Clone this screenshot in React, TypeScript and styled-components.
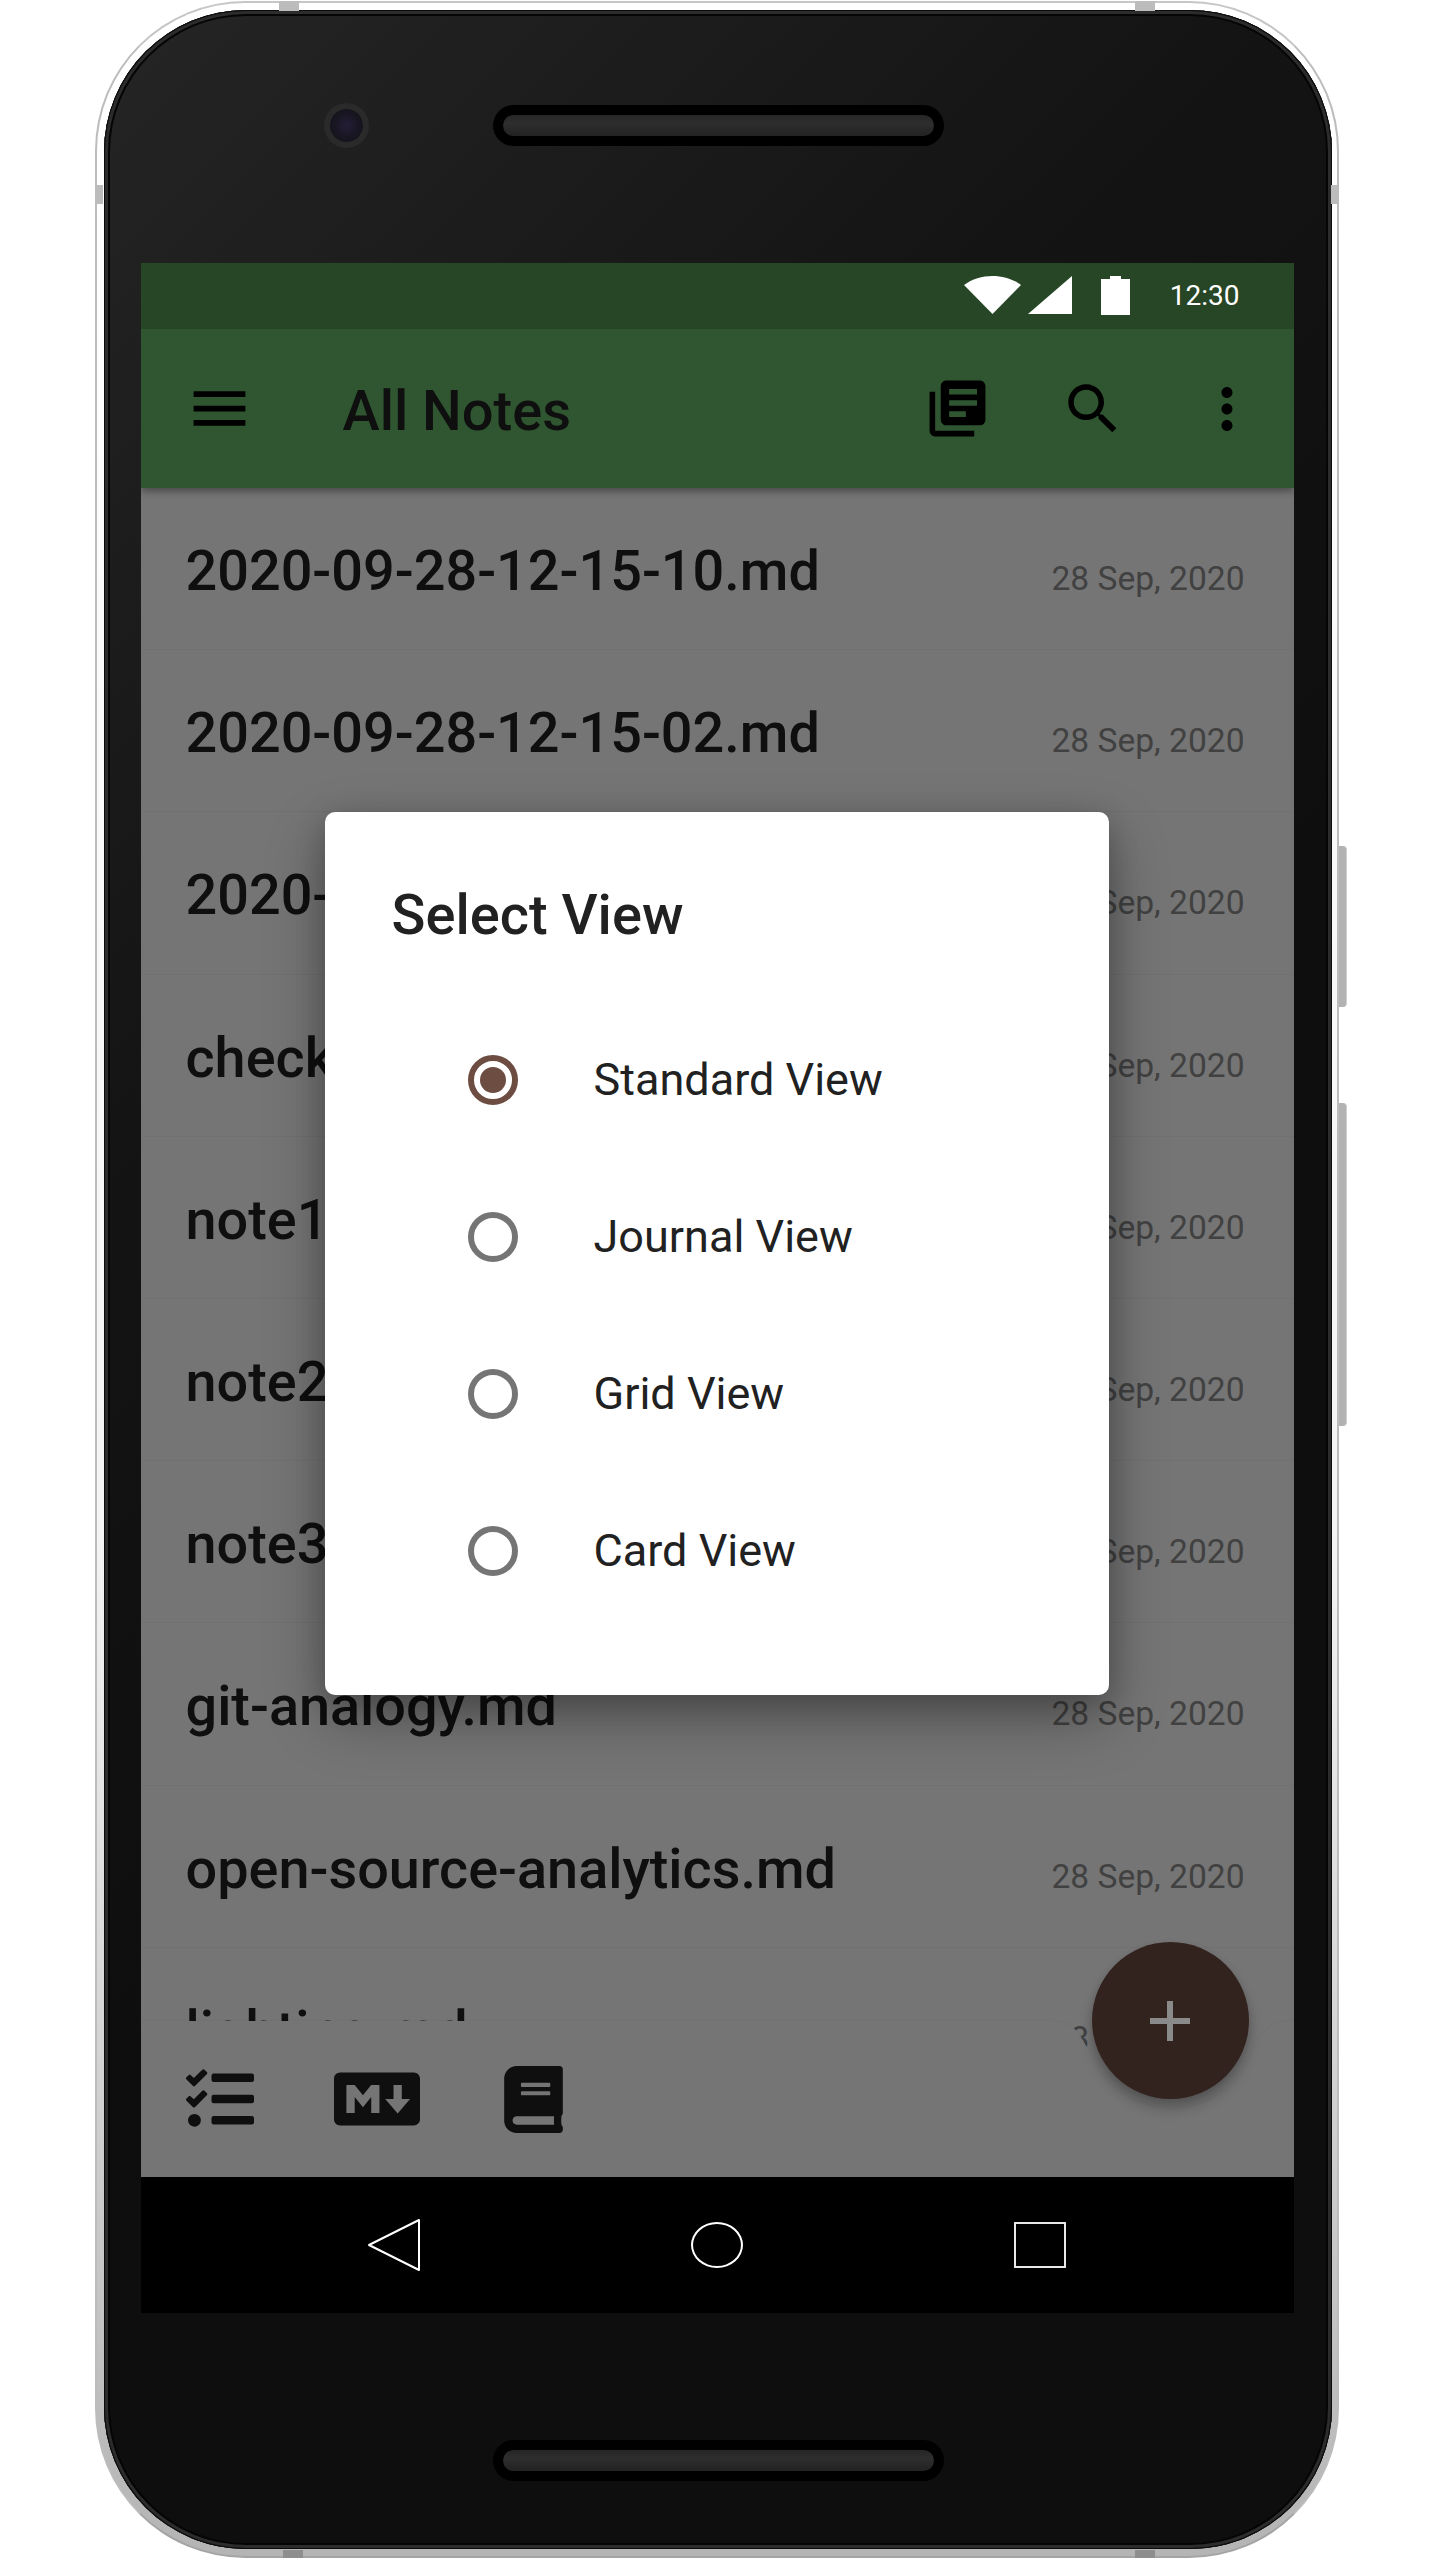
import React from "react";
import styled, { createGlobalStyle } from "styled-components";
import { FaBook, FaMarkdown, FaTasks } from "react-icons/fa";

const notes = [
  "2020-09-28-12-15-10.md",
  "2020-09-28-12-15-02.md",
  "2020-09-28-12-14-58.md",
  "checklist.md",
  "note1.md",
  "note2.md",
  "note3.md",
  "git-analogy.md",
  "open-source-analytics.md",
  "lighting.md",
];

const views = ["Standard View", "Journal View", "Grid View", "Card View"];

const App = () => (
  <>
    <GlobalStyle />
    <Device>
      <TopNotch $left={182} />
      <TopNotch $left={1038} />
      <SideNotch $side="left" />
      <SideNotch $side="right" />
      <BottomNotch $left={186} />
      <BottomNotch $left={1038} />
      <VolumeKey $top={843} $height={161} />
      <VolumeKey $top={1100} $height={323} />
      <Body>
        <Bezel $height={253} $pad="0 0 23px">
          <Camera>
            <Lens />
          </Camera>
          <Speaker />
        </Bezel>
        <Screen>
          <StatusBar>
            <svg width="57" height="38" viewBox="0 0 57 38">
              <path d="M0 9C16-3 41-3 57 9L28.500 38Z" fill="#fff" />
            </svg>
            <SignalIcon width="44" height="38" viewBox="0 0 44 38">
              <path d="M44 0V38H0Z" fill="#fff" />
            </SignalIcon>
            <BatteryIcon width="29" height="39" viewBox="0 0 29 39">
              <path d="M9 0h11v3h9v36H0V3h9z" fill="#fff" />
            </BatteryIcon>
            <Clock>12:30</Clock>
          </StatusBar>
          <Content>
            <AppBar>
              <MenuButton width="69" height="69" viewBox="0 0 24 24">
                <path d="M3 18h18v-2H3v2zm0-5h18v-2H3v2zm0-7v2h18V6H3z" />
              </MenuButton>
              <Title>All Notes</Title>
              <ActionIcon width="67" height="67" viewBox="0 0 24 24" $gap={69}>
                <path d="M4 6H2v14c0 1.100.9 2 2 2h14v-2H4V6zm16-4H8c-1.100 0-2 .9-2 2v12c0 1.100.9 2 2 2h12c1.100 0 2-.9 2-2V4c0-1.100-.9-2-2-2zm-1 9H9V9h10v2zm-4 4H9v-2h6v2zm4-8H9V5h10v2z" />
              </ActionIcon>
              <ActionIcon width="66" height="66" viewBox="0 0 24 24" $gap={68}>
                <path d="M15.500 14h-.79l-.28-.27C15.410 12.590 16 11.110 16 9.500 16 5.910 13.090 3 9.500 3S3 5.910 3 9.500 5.910 16 9.500 16c1.610 0 3.090-.59 4.230-1.570l.27.28v.79l5 4.990L20.490 19l-4.990-5zm-6 0C7.010 14 5 11.990 5 9.500S7.010 5 9.500 5 14 7.010 14 9.500 11.990 14 9.500 14z" />
              </ActionIcon>
              <ActionIcon width="66" height="66" viewBox="0 0 24 24" $gap={34}>
                <path d="M12 8c1.100 0 2-.9 2-2s-.9-2-2-2-2 .9-2 2 .9 2 2 2zm0 2c-1.100 0-2 .9-2 2s.9 2 2 2 2-.9 2-2-.9-2-2-2zm0 6c-1.100 0-2 .9-2 2s.9 2 2 2 2-.9 2-2-.9-2-2-2z" />
              </ActionIcon>
            </AppBar>
            <NoteList>
              {notes.map((note) => (
                <NoteRow key={note}>
                  <NoteName>{note}</NoteName>
                  <NoteDate>28 Sep, 2020</NoteDate>
                </NoteRow>
              ))}
            </NoteList>
            <BottomBar>
              <BarShape viewBox="0 0 1153 156" preserveAspectRatio="none">
                <path
                  d="M0 0H900C918 0 934 2 941 18L948 30A87 87 0 0 0 1112 30C1117 10 1135 0 1153 0V156H0Z"
                  fill="#fff"
                />
              </BarShape>
              <BarIcons>
                <FaTasks size={68} />
                <MarkdownIcon>
                  <FaMarkdown size={86} />
                </MarkdownIcon>
                <FaBook size={67} />
              </BarIcons>
            </BottomBar>
            <Scrim>
              <Dialog>
                <DialogTitle>Select View</DialogTitle>
                {views.map((view, i) => (
                  <ViewOption key={view}>
                    <Radio $checked={i === 0} />
                    <ViewLabel>{view}</ViewLabel>
                  </ViewOption>
                ))}
              </Dialog>
            </Scrim>
            <Fab>
              <svg width="40" height="40" viewBox="0 0 40 40">
                <path d="M17 0h6v17h17v6H23v17h-6V23H0v-6h17z" fill="#8b8a8a" />
              </svg>
            </Fab>
          </Content>
          <NavBar>
            <NavItem>
              <svg width="54" height="54" viewBox="0 0 54 54">
                <path d="M52 2V52L2 27Z" fill="none" stroke="#fff" strokeWidth="2" strokeLinejoin="round" />
              </svg>
            </NavItem>
            <NavItem>
              <HomeKey />
            </NavItem>
            <NavItem>
              <RecentKey />
            </NavItem>
          </NavBar>
        </Screen>
        <Bezel $height={235} $pad="60px 0 0">
          <Speaker />
        </Bezel>
      </Body>
    </Device>
  </>
);

const GlobalStyle = createGlobalStyle`
  html, body {
    margin: 0;
    background: #fff;
  }
  * {
    box-sizing: border-box;
  }
  #root {
    width: 1440px;
    height: 2560px;
    overflow: hidden;
    font-family: Roboto, "Liberation Sans", sans-serif;
  }
`;

const Device = styled.div`
  position: relative;
  width: 1244px;
  height: 2557px;
  margin: 1px 0 0 95px;
  padding: 7px 5px 7px 7px;
  border: 2px solid #c6c6c6;
  border-bottom-color: #a4a4a4;
  border-left-color: #bcbcbc;
  border-right-color: #bcbcbc;
  border-radius: 150px;
  background: linear-gradient(#fff 0%, #f4f4f4 60%, #b4b4b4 100%);
`;

const TopNotch = styled.div<{ $left: number }>`
  position: absolute;
  top: -2px;
  left: ${(p) => p.$left}px;
  width: 20px;
  height: 10px;
  background: #bcbcbc;
`;

const BottomNotch = styled.div<{ $left: number }>`
  position: absolute;
  bottom: -2px;
  left: ${(p) => p.$left}px;
  width: 20px;
  height: 8px;
  background: #8e8e8e;
`;

const SideNotch = styled.div<{ $side: "left" | "right" }>`
  position: absolute;
  top: 182px;
  ${(p) => p.$side}: -2px;
  width: 8px;
  height: 19px;
  background: #bcbcbc;
`;

const VolumeKey = styled.div<{ $top: number; $height: number }>`
  position: absolute;
  top: ${(p) => p.$top}px;
  right: -10px;
  width: 8px;
  height: ${(p) => p.$height}px;
  border-radius: 0 4px 4px 0;
  background: #b2b2b2;
  border-right: 1px solid #cfcfcf;
`;

const Body = styled.div`
  display: flex;
  flex-direction: column;
  align-items: center;
  height: 100%;
  border-radius: 142px;
  background: linear-gradient(135deg, #252525 0%, #141414 30%, #0e0e0e 55%);
  box-shadow: inset 0 0 0 1px #0a0a0a, inset 0 0 0 4px #2c2c2c, inset 0 0 0 6px #050505;
`;

const Bezel = styled.div<{ $height: number; $pad: string }>`
  display: flex;
  align-items: center;
  justify-content: center;
  position: relative;
  flex: none;
  width: 100%;
  height: ${(p) => p.$height}px;
  padding: ${(p) => p.$pad};
`;

const Camera = styled.div`
  position: absolute;
  left: 220px;
  top: 93px;
  display: flex;
  align-items: center;
  justify-content: center;
  width: 45px;
  height: 45px;
  border-radius: 50%;
  background: #2a2a2a;
`;

const Lens = styled.div`
  width: 33px;
  height: 33px;
  border-radius: 50%;
  background: radial-gradient(circle, #241d36 0%, #17151f 60%, #121214 100%);
`;

const Speaker = styled.div`
  width: 451px;
  height: 41px;
  padding: 10px;
  border-radius: 21px;
  background: #000;

  &::before {
    content: "";
    display: block;
    height: 21px;
    border-radius: 11px;
    background: linear-gradient(#262626, #2e2e2e 40%, #222);
  }
`;

const Screen = styled.div`
  display: flex;
  flex-direction: column;
  flex: none;
  width: 1153px;
  height: 2050px;
  margin-left: -2px;
`;

const StatusBar = styled.div`
  display: flex;
  align-items: center;
  justify-content: flex-end;
  flex: none;
  height: 66px;
  padding: 0 54px 2px 0;
  background: #274626;
`;

const SignalIcon = styled.svg`
  margin-left: 7px;
`;

const BatteryIcon = styled.svg`
  margin-left: 29px;
`;

const Clock = styled.span`
  margin-left: 40px;
  font-size: 28px;
  color: #fff;
`;

const Content = styled.div`
  position: relative;
  flex: 1;
  display: flex;
  flex-direction: column;
  overflow: hidden;
  background: #fff;
`;

const AppBar = styled.div`
  position: relative;
  z-index: 1;
  display: flex;
  align-items: center;
  flex: none;
  height: 159px;
  background: #66bb6a;
  box-shadow: 0 3px 8px rgba(0, 0, 0, 0.4);
`;

const MenuButton = styled.svg`
  margin-left: 44px;
`;

const Title = styled.div`
  flex: 1;
  margin-left: 89px;
  padding-top: 5px;
  font-size: 56px;
  font-weight: 500;
  color: #212121;
`;

const ActionIcon = styled.svg<{ $gap: number }>`
  margin-right: ${(p) => p.$gap}px;
  fill: #000;
`;

const NoteList = styled.div`
  flex: 1;
  overflow: hidden;
`;

const NoteRow = styled.div`
  display: flex;
  align-items: baseline;
  justify-content: space-between;
  height: 162.2px;
  padding: 50px 49px 0 45px;
  border-bottom: 1px solid rgba(0, 0, 0, 0.03);
`;

const NoteName = styled.span`
  font-size: 55.8px;
  font-weight: 500;
  color: #212121;
`;

const NoteDate = styled.span`
  font-size: 33.6px;
  color: #8f8f8f;
`;

const BottomBar = styled.div`
  position: absolute;
  left: 0;
  right: 0;
  bottom: 0;
  height: 156px;
`;

const BarShape = styled.svg`
  position: absolute;
  inset: 0;
  width: 100%;
  height: 100%;
  filter: drop-shadow(0 -1px 1px rgba(0, 0, 0, 0.04));
`;

const BarIcons = styled.div`
  position: relative;
  display: flex;
  align-items: center;
  gap: 80px;
  height: 100%;
  padding: 0 0 0 45px;
  color: #212121;
`;

const MarkdownIcon = styled.div`
  display: flex;
`;

const Scrim = styled.div`
  position: absolute;
  inset: 0;
  z-index: 2;
  display: flex;
  align-items: center;
  justify-content: center;
  background: rgba(0, 0, 0, 0.54);
`;

const Dialog = styled.div`
  width: 784px;
  height: 883px;
  margin: 1px 1px 0 0;
  padding: 64px 0 0 67px;
  border-radius: 10px;
  background: #fff;
  box-shadow: 0 24px 60px rgba(0, 0, 0, 0.3), 0 8px 30px rgba(0, 0, 0, 0.2);
`;

const DialogTitle = styled.div`
  height: 125px;
  font-size: 56px;
  line-height: 78px;
  font-weight: 500;
  color: #212121;
`;

const ViewOption = styled.div`
  display: flex;
  align-items: center;
  height: 157px;
  padding-left: 76px;
`;

const Radio = styled.div<{ $checked?: boolean }>`
  display: flex;
  align-items: center;
  justify-content: center;
  width: 50px;
  height: 50px;
  border-radius: 50%;
  border: 6px solid ${(p) => (p.$checked ? "#6d4c41" : "#757575")};

  &::after {
    content: "";
    display: ${(p) => (p.$checked ? "block" : "none")};
    width: 26px;
    height: 26px;
    border-radius: 50%;
    background: #6d4c41;
  }
`;

const ViewLabel = styled.span`
  margin-left: 76px;
  font-size: 45px;
  color: #212121;
`;

const Fab = styled.div`
  position: absolute;
  z-index: 3;
  right: 45px;
  bottom: 78px;
  display: flex;
  align-items: center;
  justify-content: center;
  width: 157px;
  height: 157px;
  border-radius: 50%;
  background: #33231f;
  box-shadow: 0 10px 14px rgba(0, 0, 0, 0.2), 0 4px 8px rgba(0, 0, 0, 0.12);
`;

const NavBar = styled.div`
  display: flex;
  align-items: center;
  justify-content: center;
  flex: none;
  height: 136px;
  padding-bottom: 1px;
  background: #000;
`;

const NavItem = styled.div`
  display: flex;
  justify-content: center;
  width: 323px;
`;

const HomeKey = styled.div`
  width: 52px;
  height: 46px;
  border: 2px solid #fff;
  border-radius: 50%;
`;

const RecentKey = styled.div`
  width: 52px;
  height: 46px;
  border: 2px solid #e8e8e8;
`;

export default App;
